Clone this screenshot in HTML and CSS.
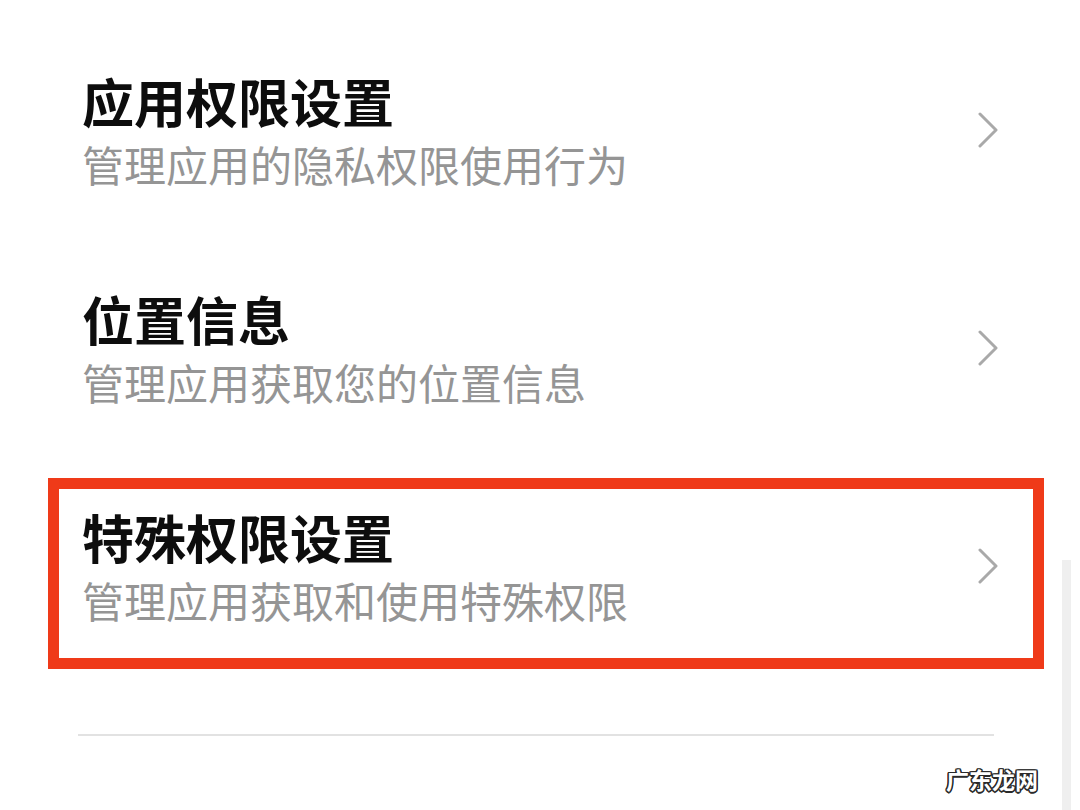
FILE: index.html
```html
<!DOCTYPE html>
<html lang="zh-CN">
<head>
<meta charset="utf-8">
<title>隐私设置</title>
<link rel="stylesheet" href="styles.css">
</head>
<body>
<div class="page">
  <ul class="menu">
    <li class="item">
      <div class="texts">
        <div class="title">应用权限设置</div>
        <div class="sub">管理应用的隐私权限使用行为</div>
      </div>
      <svg class="chev" viewBox="0 0 20 36" width="20" height="36"><polyline points="2,2 18,18 2,34" fill="none" stroke="#a9a9a9" stroke-width="3" stroke-linecap="round" stroke-linejoin="round"/></svg>
    </li>
    <li class="item">
      <div class="texts">
        <div class="title">位置信息</div>
        <div class="sub">管理应用获取您的位置信息</div>
      </div>
      <svg class="chev" viewBox="0 0 20 36" width="20" height="36"><polyline points="2,2 18,18 2,34" fill="none" stroke="#a9a9a9" stroke-width="3" stroke-linecap="round" stroke-linejoin="round"/></svg>
    </li>
    <li class="item">
      <div class="texts">
        <div class="title">特殊权限设置</div>
        <div class="sub">管理应用获取和使用特殊权限</div>
      </div>
      <svg class="chev" viewBox="0 0 20 36" width="20" height="36"><polyline points="2,2 18,18 2,34" fill="none" stroke="#a9a9a9" stroke-width="3" stroke-linecap="round" stroke-linejoin="round"/></svg>
    </li>
  </ul>
  <div class="ghost-card">
    <div class="divider"></div>
  </div>
  <div class="highlight"></div>
  <div class="scrollbar"></div>
  <div class="watermark">广东龙网</div>
</div>
</body>
</html>
```

FILE: styles.css
```css
html, body {
  margin: 0;
  padding: 0;
  background: #ffffff;
}

.page {
  position: relative;
  width: 1080px;
  height: 810px;
  overflow: hidden;
  font-family: "Noto Sans CJK SC", "Noto Sans", sans-serif;
}

.menu {
  list-style: none;
  margin: 0;
  padding: 71px 82px 0 82px;
  display: flex;
  flex-direction: column;
  gap: 100px;
}

.item {
  display: flex;
  align-items: center;
  justify-content: space-between;
  height: 118px;
}

.texts {
  display: flex;
  flex-direction: column;
  gap: 8px;
}

.title {
  font-size: 52px;
  line-height: 60px;
  font-weight: 700;
  color: #0d0d0d;
  white-space: nowrap;
}

.sub {
  font-size: 42px;
  line-height: 50px;
  font-weight: 400;
  color: #959595;
  white-space: nowrap;
}

.chev {
  display: block;
  flex: none;
}

.ghost-card {
  margin: 109px 86px 0 78px;
  height: 2px;
}

.divider {
  height: 2px;
  background: #e2e2e2;
}

.highlight {
  position: absolute;
  left: 48px;
  top: 478px;
  width: 974px;
  height: 169px;
  border: 11px solid #ef3a19;
}

.scrollbar {
  position: absolute;
  left: 1062px;
  top: 560px;
  width: 9px;
  height: 250px;
  background: #efefef;
}

.watermark {
  position: absolute;
  left: 946px;
  top: 764px;
  font-family: "Noto Sans CJK SC", sans-serif;
  font-size: 23px;
  line-height: 30px;
  font-weight: 700;
  letter-spacing: 0;
  color: #ffffff;
  text-shadow:
    1.5px 0 0 #2a2a2a, -1.5px 0 0 #2a2a2a, 0 1.5px 0 #2a2a2a, 0 -1.5px 0 #2a2a2a,
    1.2px 1.2px 0 #2a2a2a, -1.2px 1.2px 0 #2a2a2a, 1.2px -1.2px 0 #2a2a2a, -1.2px -1.2px 0 #2a2a2a;
}
```
